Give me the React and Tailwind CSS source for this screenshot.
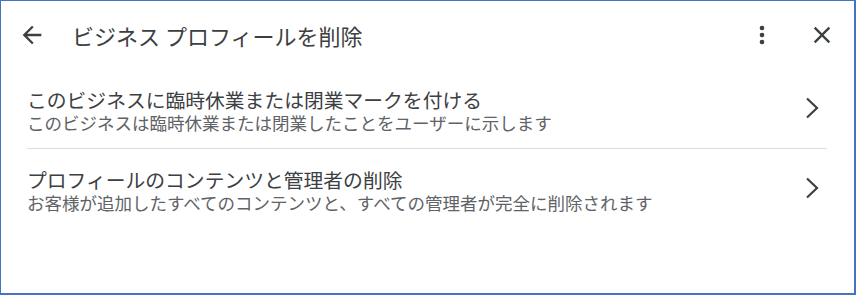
import React from 'react'

const rows = [
  {
    title: 'このビジネスに臨時休業または閉業マークを付ける',
    sub: 'このビジネスは臨時休業または閉業したことをユーザーに示します',
  },
  {
    title: 'プロフィールのコンテンツと管理者の削除',
    sub: 'お客様が追加したすべてのコンテンツと、すべての管理者が完全に削除されます',
  },
]

function Chevron() {
  return (
    <svg width="14" height="22" viewBox="0 0 14 22" className="shrink-0 mb-[6px]">
      <polyline points="2,1.5 12,11 2,20.5" fill="none" stroke="#3c4043" strokeWidth="2.2" />
    </svg>
  )
}

export default function App() {
  return (
    <div
      className="w-[856px] h-[295px] bg-white border-t border-l border-r-2 border-b-2 border-[#4472c4] flex flex-col"
      style={{ fontFamily: '"Noto Sans CJK JP", "Noto Sans", sans-serif' }}
    >
      {/* header */}
      <div className="h-[68px] flex items-center pl-[17px] pr-[18px] shrink-0">
        <svg width="28" height="28" viewBox="0 0 24 24" fill="#3c4043">
          <path d="M20 11H7.83l5.59-5.59L12 4l-8 8 8 8 1.41-1.41L7.83 13H20v-2z" />
        </svg>
        <div className="ml-[26px] flex-1 text-[22px] leading-[28px] text-[#3c4043]">
          ビジネス プロフィールを削除
        </div>
        <svg width="28" height="28" viewBox="0 0 24 24" fill="#3c4043">
          <circle cx="12" cy="6" r="2" />
          <circle cx="12" cy="12" r="2" />
          <circle cx="12" cy="18" r="2" />
        </svg>
        <svg width="28" height="28" viewBox="0 0 24 24" fill="#3c4043" className="ml-[32px]">
          <path d="M19 6.41L17.59 5 12 10.59 6.41 5 5 6.41 10.59 12 5 17.59 6.41 19 12 13.41 17.59 19 19 17.59 13.41 12z" />
        </svg>
      </div>

      {/* options */}
      <div className="ml-[26px] mr-[27px]">
        {rows.map((r, i) => (
          <div
            key={i}
            className={
              'flex items-center pt-[19px] pb-[14px] pr-[8px] ' +
              (i === 0 ? 'border-b border-[#dadce0]' : '')
            }
          >
            <div className="flex-1">
              <div className="text-[19.8px] leading-[24px] text-[#3c4043] whitespace-nowrap">{r.title}</div>
              <div className="text-[17.5px] leading-[22px] text-[#5f6368] whitespace-nowrap">{r.sub}</div>
            </div>
            <Chevron />
          </div>
        ))}
      </div>
    </div>
  )
}
